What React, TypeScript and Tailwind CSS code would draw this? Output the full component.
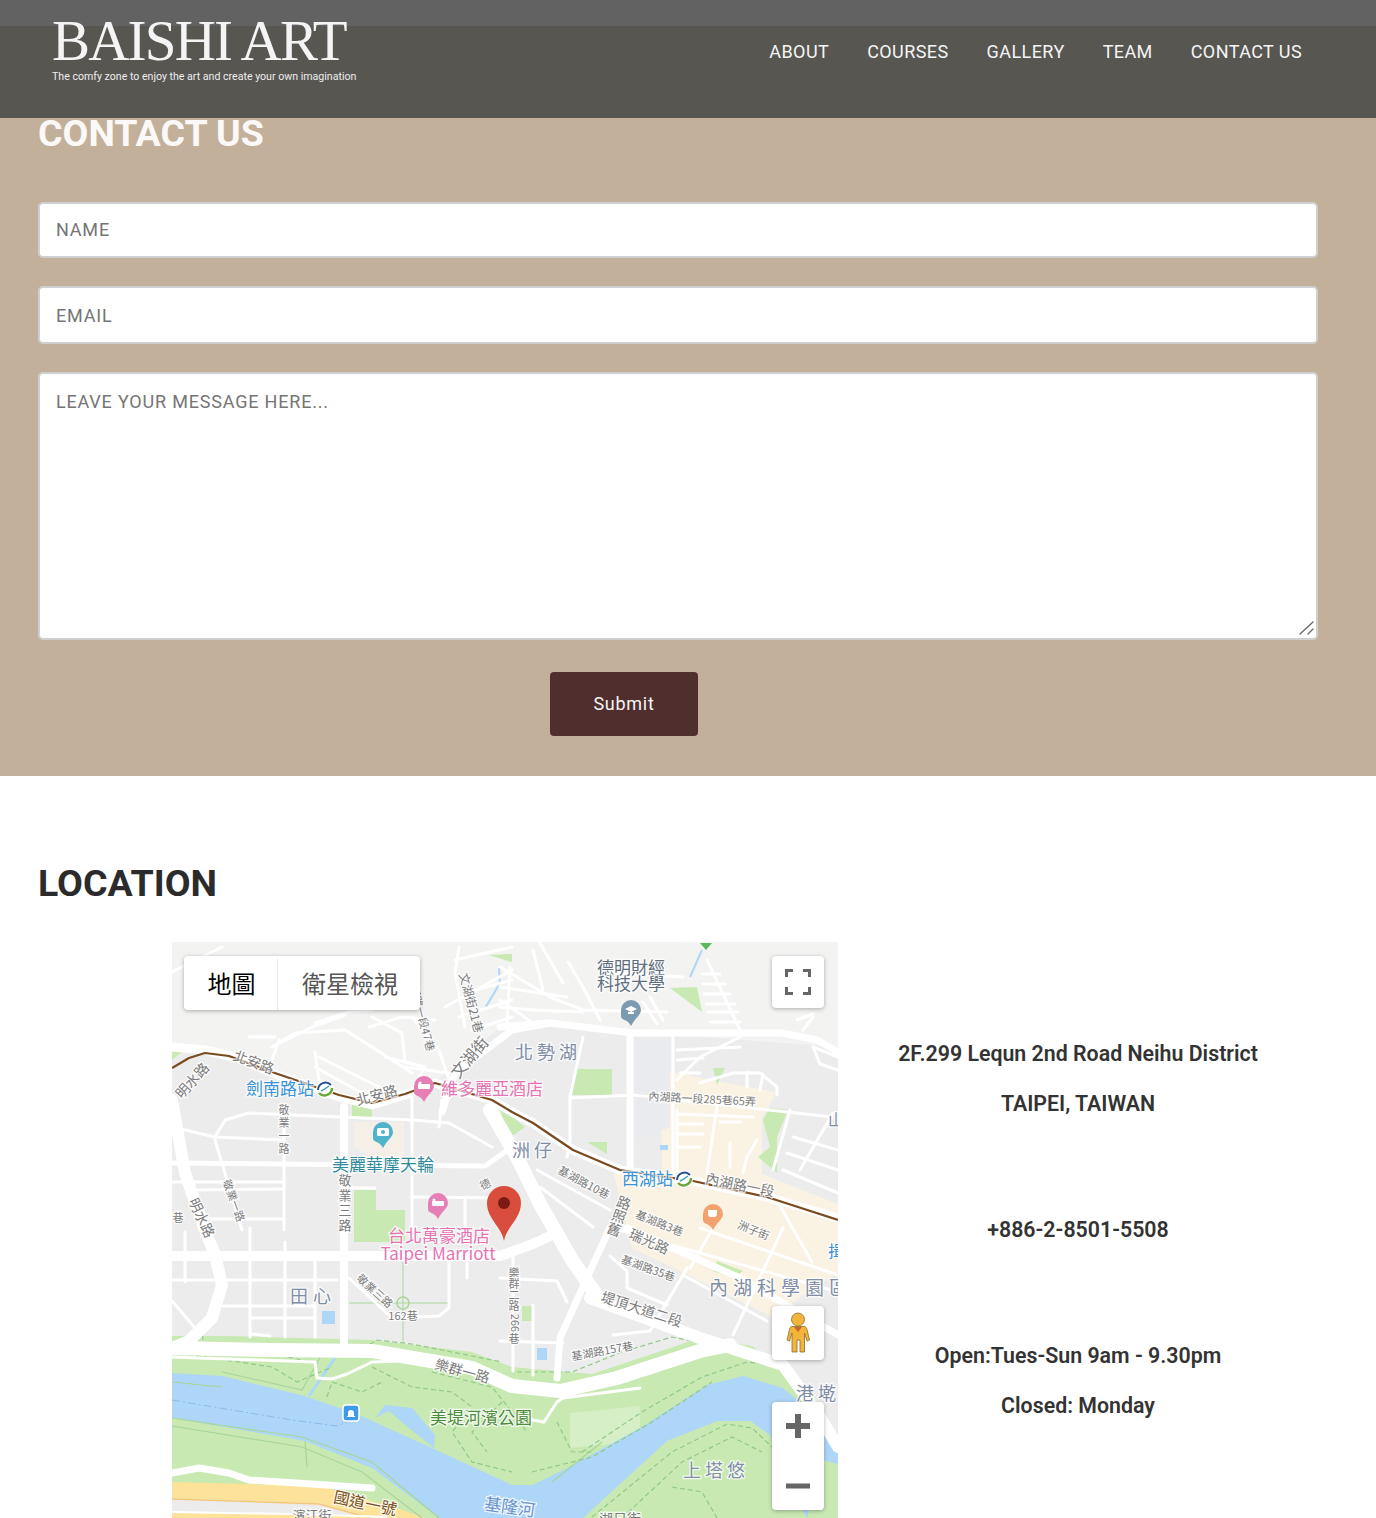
type Pt = [number, number];

const pts = (p: Pt[]) => p.map((q) => q.join(',')).join(' ');

// map data, all coordinates are local to the 666x576 map
const areas: { c: string; p: Pt[] }[] = [
  { c: '#f3f3f2', p: [[0, 0], [666, 0], [666, 105], [461, 90], [378, 80], [328, 85], [263, 140], [200, 160], [100, 130], [0, 105]] },
  { c: '#faf2e2', p: [[489, 128], [560, 142], [605, 150], [590, 175], [590, 232], [666, 262], [666, 330], [600, 375], [510, 330], [460, 306], [440, 226], [490, 232]] },
  { c: '#e9ebee', p: [[463, 97], [498, 97], [498, 185], [463, 198]] },
  { c: '#f5efe8', p: [[182, 180], [232, 180], [232, 215], [200, 215], [182, 205]] },
  { c: '#c9e9b2', p: [[180, 163], [200, 163], [200, 175], [180, 175]] },
  { c: '#c9e9b2', p: [[182, 248], [204, 248], [204, 268], [233, 268], [233, 300], [182, 300]] },
  { c: '#c9e9b2', p: [[405, 127], [440, 127], [440, 153], [400, 153]] },
  { c: '#c9e9b2', p: [[541, 126], [553, 126], [545, 143]] },
  { c: '#c9e9b2', p: [[498, 46], [525, 45], [530, 70]] },
  { c: '#c9e9b2', p: [[415, 200], [435, 200], [435, 212]] },
  { c: '#c9e9b2', p: [[328, 165], [353, 185], [335, 198]] },
  { c: '#c9e9b2', p: [[598, 166], [616, 168], [605, 195], [605, 231], [586, 215], [598, 205], [591, 178]] },
  { c: '#c9e9b2', p: [[317, 13], [340, 20], [340, 12]] },
  { c: '#c9e9b2', p: [[545, 319], [571, 329], [561, 336], [541, 329]] },
  { c: '#c9e9b2', p: [[350, 364], [360, 364], [360, 379], [350, 379]] },
  { c: '#c9e9b2', p: [[0, 108], [14, 107], [0, 118]] },
  { c: '#aed6f8', p: [[150, 369], [163, 369], [163, 382], [150, 382]] },
  { c: '#aed6f8', p: [[365, 406], [375, 406], [375, 418], [365, 418]] },
  { c: '#aed6f8', p: [[488, 203], [496, 203], [496, 208], [488, 208]] },
  // riverside park
  { c: '#c9e9b2', p: [[0, 394], [60, 394], [200, 398], [300, 410], [340, 425], [420, 432], [528, 396], [580, 404], [640, 450], [666, 505], [666, 576], [0, 576]] },
  { c: '#d6efc6', p: [[398, 471], [468, 464], [468, 499], [398, 506]] },
  // river
  { c: '#aed6f8', p: [[0, 431], [50, 434], [133, 454], [187, 473], [260, 506], [340, 543], [361, 543], [395, 526], [468, 486], [535, 443], [571, 434], [611, 446], [640, 470], [666, 505], [666, 522], [650, 518], [635, 576], [618, 546], [598, 493], [578, 479], [545, 479], [495, 499], [411, 576], [267, 576], [200, 526], [133, 499], [0, 476]] },
  { c: '#aed6f8', p: [[203, 476], [213, 463], [240, 466], [263, 493], [262, 506], [237, 486], [217, 469]] },
  // bottom left corner: highway and streets
  { c: '#ececec', p: [[0, 556], [147, 561], [205, 576], [0, 576]] },
  { c: '#fde29a', p: [[0, 540], [150, 544], [233, 569], [253, 576], [200, 576], [147, 561], [0, 556]] },
  { c: '#fde29a', p: [[0, 571], [200, 573], [215, 576], [0, 576]] },
];

const majorRoads: { w: number; p: Pt[] }[] = [
  { w: 9, p: [[0, 105], [33, 108], [67, 116], [100, 131], [167, 155], [200, 163], [233, 153], [263, 141], [320, 158], [340, 170], [361, 181], [401, 208], [448, 228], [521, 239], [595, 255], [666, 276]] },
  { w: 14, p: [[318, 168], [345, 215], [368, 262], [400, 318], [428, 358]] },
  { w: 10, p: [[0, 314], [172, 314], [260, 314], [328, 314], [361, 302], [384, 291]] },
  { w: 8, p: [[172, 165], [172, 406]] },
  { w: 12, p: [[0, 158], [13, 231], [33, 288], [43, 313], [50, 343], [40, 376], [17, 399], [0, 406]] },
  { w: 7, p: [[328, 85], [378, 81], [461, 91], [611, 91], [645, 98], [666, 110]] },
  { w: 7, p: [[270, 170], [283, 131], [340, 88], [378, 81]] },
  { w: 14, p: [[0, 406], [100, 408], [200, 409], [300, 426], [340, 444], [388, 449], [445, 436], [528, 409], [558, 403]] },
  { w: 12, p: [[418, 356], [528, 396], [611, 423], [645, 470], [666, 505]] },
  { w: 7, p: [[438, 286], [418, 329], [388, 396], [385, 436]] },
  { w: 7, p: [[455, 286], [568, 336], [666, 393]] },
  { w: 5, p: [[0, 221], [313, 224], [340, 205]] },
  { w: 7, p: [[458, 95], [458, 228]] },
  { w: 7, p: [[0, 531], [27, 526], [57, 531], [77, 538], [200, 546]] },
];

const minorRoads: Pt[][] = [
  [[0, 185], [43, 195], [110, 198]],
  [[43, 195], [53, 178], [77, 171], [167, 175], [240, 178], [277, 181], [320, 205]],
  [[112, 165], [112, 288]],
  [[240, 155], [240, 288]],
  [[293, 258], [293, 288]],
  [[240, 255], [340, 256]],
  [[20, 248], [110, 247]],
  [[30, 277], [110, 277]],
  [[43, 198], [70, 288]],
  [[180, 246], [203, 246]],
  [[270, 158], [267, 185]],
  [[100, 105], [123, 91], [173, 88], [200, 105], [240, 131]],
  [[107, 98], [100, 118]],
  [[147, 115], [207, 145]],
  [[143, 125], [197, 155]],
  [[143, 110], [147, 138]],
  [[200, 75], [230, 91], [233, 121]],
  [[213, 115], [253, 125], [240, 148]],
  [[273, 65], [340, 28]],
  [[283, 18], [340, 5]],
  [[287, 5], [283, 31], [293, 85]],
  [[240, 75], [267, 108], [277, 138]],
  [[173, 73], [140, 85], [100, 105]],
  [[0, 30], [50, 5]],
  [[77, 95], [103, 95]],
  [[143, 81], [177, 70], [200, 68]],
  [[197, 85], [230, 75], [263, 78]],
  [[233, 125], [277, 131]],
  [[287, 75], [340, 58]],
  [[293, 51], [340, 38]],
  [[300, 88], [340, 75]],
  [[361, 8], [371, 48]],
  [[338, 25], [335, 81]],
  [[328, 58], [361, 81]],
  [[411, 45], [428, 78]],
  [[478, 55], [491, 78]],
  [[471, 60], [485, 82]],
  [[445, 31], [511, 35]],
  [[361, 68], [411, 70]],
  [[621, 195], [666, 208]],
  [[615, 211], [666, 228]],
  [[611, 228], [666, 251]],
  [[641, 75], [631, 88]],
  [[625, 78], [641, 72]],
  [[535, 18], [568, 88]],
  [[530, 32], [548, 32]],
  [[531, 42], [553, 42]],
  [[532, 52], [558, 52]],
  [[534, 62], [563, 62]],
  [[536, 70], [566, 70]],
  [[538, 80], [568, 80]],
  [[501, 95], [501, 231]],
  [[398, 156], [461, 153], [660, 175]],
  [[398, 158], [398, 198], [395, 215]],
  [[411, 95], [398, 155]],
  [[328, 25], [378, 55], [411, 68], [495, 70]],
  [[328, 45], [395, 55]],
  [[328, 65], [361, 68]],
  [[368, 1], [391, 41]],
  [[396, 20], [408, 40], [415, 52]],
  [[505, 138], [528, 115], [568, 95]],
  [[505, 108], [568, 105]],
  [[505, 118], [531, 116]],
  [[508, 131], [528, 131]],
  [[528, 141], [561, 131], [588, 131], [605, 145], [605, 153]],
  [[575, 130], [575, 145]],
  [[591, 132], [588, 148]],
  [[666, 115], [641, 105], [648, 122], [666, 128]],
  [[661, 171], [628, 228]],
  [[618, 168], [601, 228]],
  [[545, 165], [535, 231]],
  [[505, 168], [505, 228]],
  [[505, 172], [581, 175]],
  [[505, 182], [531, 182]],
  [[505, 192], [531, 192]],
  [[505, 205], [528, 205]],
  [[548, 180], [568, 180]],
  [[585, 198], [575, 215], [571, 231]],
  [[558, 201], [558, 225]],
  [[365, 228], [438, 268]],
  [[368, 245], [421, 285]],
  [[328, 336], [385, 339], [395, 360]],
  [[361, 363], [361, 433]],
  [[341, 313], [341, 429]],
  [[328, 399], [391, 401]],
  [[438, 314], [455, 329], [455, 346], [495, 363]],
  [[515, 326], [478, 389], [441, 393]],
  [[611, 286], [561, 393]],
  [[518, 326], [541, 286]],
  [[666, 333], [528, 286]],
  [[511, 333], [595, 379]],
  [[440, 286], [666, 350]],
  [[113, 300], [113, 395]],
  [[143, 315], [143, 395]],
  [[78, 286], [78, 395]],
  [[13, 290], [13, 340]],
  [[0, 338], [165, 338]],
  [[50, 364], [143, 364]],
  [[80, 376], [143, 376]],
  [[80, 392], [98, 394]],
  [[0, 359], [23, 386]],
  [[177, 336], [220, 376], [267, 374], [277, 366], [277, 319]],
  [[295, 320], [295, 336]],
  [[0, 415], [143, 420], [145, 436], [160, 437], [175, 432], [200, 420], [230, 419]],
  [[391, 456], [468, 446]],
  [[372, 480], [385, 460], [391, 456]],
  [[360, 478], [372, 480]],
  [[0, 240], [112, 240]],
  [[600, 250], [640, 320]],
];

const parkPaths: Pt[][] = [
  [[30, 393], [33, 405], [100, 412], [140, 420]],
  [[0, 410], [100, 425], [125, 440], [160, 425]],
  [[155, 455], [160, 440], [190, 450], [210, 440]],
  [[200, 425], [240, 445], [280, 450], [300, 465], [280, 490], [300, 520], [340, 530]],
  [[260, 430], [320, 445], [340, 470], [355, 490]],
  [[330, 460], [300, 490], [315, 510]],
  [[385, 480], [400, 510], [420, 510]],
  [[410, 510], [470, 470], [530, 435], [575, 420], [620, 425]],
  [[360, 530], [420, 515], [480, 480], [540, 440]],
  [[420, 575], [500, 510], [555, 482], [580, 486], [600, 505]],
  [[450, 576], [510, 520], [560, 495], [590, 510]],
  [[500, 545], [530, 550], [545, 576]],
  [[177, 415], [205, 398], [240, 402], [290, 412], [330, 420]],
  [[345, 430], [400, 430], [450, 410], [500, 395], [525, 400]],
];

const parkLines: Pt[][] = [
  [[0, 476], [130, 495], [200, 520], [267, 576]],
  [[0, 484], [130, 505], [190, 530], [250, 576]],
  [[133, 499], [135, 525]],
  [[50, 430], [130, 448], [150, 412]],
  [[0, 440], [50, 445]],
  [[380, 540], [430, 500]],
];

type Lab = { t: string; x: number; y: number; s: number; c: string; r?: number; a?: 'start' | 'middle'; ls?: number };

const grey = '#7b7b7b';
const slate = '#7f8da6';
const labels: Lab[] = [
  { t: '明水路', x: 24, y: 142, s: 14, c: grey, r: -48 },
  { t: '北安路', x: 80, y: 125, s: 14, c: grey, r: 20 },
  { t: '劍南路站', x: 74, y: 153, s: 17, c: '#3b92d6', a: 'start' },
  { t: '北安路', x: 206, y: 158, s: 14, c: grey, r: -15 },
  { t: '維多麗亞酒店', x: 269, y: 153, s: 17, c: '#e672b4', a: 'start' },
  { t: '文湖街21巷', x: 295, y: 62, s: 12, c: grey, r: 75 },
  { t: '內湖路一段47巷', x: 245, y: 72, s: 11, c: grey, r: 75 },
  { t: '文湖街', x: 302, y: 119, s: 16, c: grey, r: -50 },
  { t: '德明財經', x: 459, y: 32, s: 17, c: '#5f6f7e' },
  { t: '科技大學', x: 459, y: 48, s: 17, c: '#5f6f7e' },
  { t: '北勢湖', x: 376, y: 117, s: 18, c: slate, ls: 4 },
  { t: '內湖路一段285巷65弄', x: 530, y: 161, s: 11, c: grey, r: 3 },
  { t: '洲仔', x: 362, y: 215, s: 18, c: slate, ls: 4 },
  { t: '基湖路10巷', x: 410, y: 244, s: 11, c: grey, r: 28 },
  { t: '西湖站', x: 450, y: 243, s: 17, c: '#3b92d6', a: 'start' },
  { t: '內湖路一段', x: 567, y: 248, s: 14, c: grey, r: 11 },
  { t: '敬業一路', x: 58, y: 260, s: 11, c: grey, r: 70 },
  { t: '明水路', x: 25, y: 278, s: 14, c: grey, r: 65 },
  { t: '美麗華摩天輪', x: 211, y: 229, s: 17, c: '#2f8b9c' },
  { t: '巷', x: 6, y: 280, s: 11, c: grey },
  { t: '基湖路3巷', x: 486, y: 285, s: 11, c: grey, r: 22 },
  { t: '瑞光路', x: 475, y: 304, s: 14, c: grey, r: 24 },
  { t: '洲子街', x: 580, y: 292, s: 11, c: grey, r: 22 },
  { t: '台北萬豪酒店', x: 267, y: 300, s: 17, c: '#e672b4' },
  { t: 'Taipei Marriott', x: 266, y: 318, s: 17, c: '#e672b4' },
  { t: '基湖路35巷', x: 475, y: 330, s: 11, c: grey, r: 20 },
  { t: '內湖科學園區', x: 537, y: 353, s: 19, c: slate, a: 'start', ls: 5 },
  { t: '田心', x: 141, y: 361, s: 18, c: slate, ls: 5 },
  { t: '敬業三路', x: 200, y: 352, s: 11, c: grey, r: 42 },
  { t: '162巷', x: 231, y: 378, s: 11, c: grey },
  { t: '堤頂大道二段', x: 468, y: 372, s: 14, c: grey, r: 18 },
  { t: '基湖路157巷', x: 431, y: 413, s: 11, c: grey, r: -10 },
  { t: '樂群一路', x: 289, y: 434, s: 14, c: grey, r: 15 },
  { t: '港墘', x: 646, y: 458, s: 18, c: slate, ls: 4 },
  { t: '美堤河濱公園', x: 258, y: 482, s: 17, c: '#4d8c3d', a: 'start' },
  { t: '上塔悠', x: 544, y: 535, s: 18, c: slate, ls: 4 },
  { t: '國道一號', x: 192, y: 567, s: 16, c: '#7a5020', r: 12 },
  { t: '濱江街', x: 140, y: 578, s: 13, c: grey },
  { t: '基隆河', x: 337, y: 571, s: 17, c: '#6a92cc', r: 8 },
  { t: '湖日街', x: 448, y: 582, s: 14, c: grey },
  { t: '山', x: 664, y: 184, s: 16, c: slate },
  { t: '揖', x: 664, y: 315, s: 16, c: '#3b92d6' },
  // house numbers in a vertical street name lie sideways
  { t: '266', x: 339, y: 381, s: 11, c: grey, r: 90, a: 'middle' },
];

type VLab = { t: string; x: number; y: number; s: number; gap: number; r?: number };
const vertical: VLab[] = [
  { t: '敬業一路', x: 112, y: 172, s: 11, gap: 13 },
  { t: '敬業三路', x: 173, y: 243, s: 13, gap: 15 },
  { t: '樂群二路', x: 342, y: 335, s: 11, gap: 11 },
  { t: '巷', x: 342, y: 401, s: 11, gap: 11 },
  { t: '路照舊', x: 450, y: 266, s: 14, gap: 14, r: 20 },
  { t: '德', x: 315, y: 246, s: 11, gap: 13, r: -25 },
];

function Pin({ x, y, fill, r = 10 }: { x: number; y: number; fill: string; r?: number }) {
  return (
    <g transform={`translate(${x} ${y})`}>
      <path d={`M${-r} 0a${r} ${r} 0 1 1 ${2 * r} 0c0 5-${r * 0.6} 8-${r} ${r + 6}c-${r * 0.4}-${r - 2}-${r}-${r * 0.5}-${r}-${r}z`} fill={fill} />
    </g>
  );
}

function Station({ x, y }: { x: number; y: number }) {
  return (
    <g transform={`translate(${x} ${y})`}>
      <circle r="9" fill="#fff" />
      <path d="M-7 1a7.500 7.500 0 0 1 13-5" fill="none" stroke="#27508f" strokeWidth="2" />
      <path d="M7-1a7.500 7.500 0 0 1-13 5" fill="none" stroke="#6aa83a" strokeWidth="2.500" />
      <path d="M-4 2c3-1 5-3 8-5" fill="none" stroke="#3a9fb0" strokeWidth="1.500" />
    </g>
  );
}

function MapDrawing() {
  return (
    <svg viewBox="0 0 666 576" width="666" height="576" className="block">
      <rect width="666" height="576" fill="#ececec" />
      {areas.map((a, i) => (
        <polygon key={i} points={pts(a.p)} fill={a.c} />
      ))}
      <polyline points={pts([[0, 557], [147, 562], [205, 578]])} fill="none" stroke="#f6c778" strokeWidth="1.500" />
      <polyline points={pts([[0, 570], [120, 572], [215, 575]])} fill="#fff" stroke="#fff" strokeWidth="2" />
      <polyline points={pts([[137, 454], [163, 416]])} fill="none" stroke="#aed6f8" strokeWidth="3" />
      <polyline points={pts([[530, 8], [518, 35]])} fill="none" stroke="#aed6f8" strokeWidth="2" />
      <polyline points={pts([[327, 26], [328, 41], [312, 68]])} fill="none" stroke="#aed6f8" strokeWidth="2" />
      <polyline points={pts([[0, 458], [60, 468], [120, 478], [165, 484], [180, 478]])} fill="none" stroke="#8fb8e8" strokeWidth="1" strokeDasharray="8 3 2 3" />
      {parkLines.map((p, i) => (
        <polyline key={i} points={pts(p)} fill="none" stroke="#a8d59a" strokeWidth="1.200" />
      ))}
      {parkPaths.map((p, i) => (
        <polyline key={i} points={pts(p)} fill="none" stroke="#8fc987" strokeWidth="1.200" strokeDasharray="5 3" />
      ))}
      <circle cx="231" cy="361" r="6" fill="none" stroke="#a8d59a" strokeWidth="1.500" />
      <polyline points={pts([[177, 361], [277, 361]])} fill="none" stroke="#a8d59a" strokeWidth="1" />
      <polyline points={pts([[231, 320], [231, 400]])} fill="none" stroke="#a8d59a" strokeWidth="1" />
      {minorRoads.map((p, i) => (
        <polyline key={i} points={pts(p)} fill="none" stroke="#fff" strokeWidth="3" strokeLinejoin="round" strokeLinecap="round" />
      ))}
      {majorRoads.map((r, i) => (
        <polyline key={i} points={pts(r.p)} fill="none" stroke="#fff" strokeWidth={r.w} strokeLinejoin="round" strokeLinecap="round" />
      ))}
      <polygon points={pts([[528, 1], [540, 1], [534, 8]])} fill="#5cb85c" />
      <polyline
        points={pts([[0, 126], [17, 116], [33, 111], [57, 114], [100, 130], [167, 153], [200, 161], [233, 152], [263, 141], [320, 158], [340, 170], [361, 181], [401, 208], [448, 228], [521, 239], [595, 255], [666, 278]])}
        fill="none"
        stroke="#7a4a20"
        strokeWidth="2.200"
        strokeLinejoin="round"
      />

      {labels.map((l, i) => (
        <text
          key={i}
          x={l.x}
          y={l.y}
          fontSize={l.s}
          fill={l.c}
          textAnchor={l.a ?? 'middle'}
          letterSpacing={l.ls}
          stroke="#fff"
          strokeOpacity="0.8"
          strokeWidth="2.500"
          paintOrder="stroke"
          transform={l.r ? `rotate(${l.r} ${l.x} ${l.y})` : undefined}
          fontFamily="'Noto Sans CJK TC','Noto Sans',sans-serif"
        >
          {l.t}
        </text>
      ))}
      {vertical.map((v, i) => (
        <g key={i} transform={v.r ? `rotate(${v.r} ${v.x} ${v.y})` : undefined}>
          {Array.from(v.t).map((ch, j) => (
            <text
              key={j}
              x={v.x}
              y={v.y + j * v.gap}
              fontSize={v.s}
              fill={grey}
              textAnchor="middle"
              stroke="#fff"
              strokeOpacity="0.8"
              strokeWidth="2.500"
              paintOrder="stroke"
              fontFamily="'Noto Sans CJK TC','Noto Sans',sans-serif"
            >
              {ch}
            </text>
          ))}
        </g>
      ))}

      <Station x={153} y={147} />
      <Station x={512} y={237} />

      <Pin x={252} y={144} fill="#e57fb6" />
      <rect x={246} y={142} width="12" height="5" rx="1" fill="#fff" />
      <circle cx={248} cy={141} r="1.500" fill="#fff" />
      <Pin x={266} y={261} fill="#e57fb6" />
      <rect x={260} y={259} width="12" height="5" rx="1" fill="#fff" />
      <circle cx={262} cy={258} r="1.500" fill="#fff" />
      <Pin x={211} y={190} fill="#4fb3c9" />
      <rect x={205} y={186} width="12" height="8" rx="1.500" fill="#fff" />
      <circle cx={211} cy={190} r="2" fill="#4fb3c9" />
      <Pin x={459} y={68} fill="#7d9bb0" />
      <path d="M453 67l6-3 6 3-6 3z" fill="#fff" />
      <path d="M456 70v2h6v-2" fill="#fff" />
      <Pin x={541} y={272} fill="#f3a26e" />
      <path d="M536 268h9v4a3 3 0 0 1-3 3h-3a3 3 0 0 1-3-3z" fill="#fff" />

      <rect x={171} y={463} width="16" height="16" rx="3" fill="#3f9bea" stroke="#fff" strokeWidth="1.500" />
      <path d="M175 475h8v-1h-1v-3a3 3 0 0 0-6 0v3h-1z" fill="#fff" />

      {/* red place marker */}
      <path d="M332 299c-2-14-17-22-17-38a17 17 0 0 1 34 0c0 16-15 24-17 38z" fill="#d94d3d" />
      <circle cx={332} cy={261} r="6" fill="#7c1a14" />
    </svg>
  );
}

function MapControls() {
  return (
    <>
      <div className="absolute left-3 top-[14px] flex h-[54px] w-[236px] rounded-sm bg-white pt-[3px] text-2xl shadow-[0_1px_4px_rgba(0,0,0,0.3)] font-['Roboto','Noto_Sans_CJK_TC',sans-serif]">
        <div className="flex w-[94px] items-center justify-center border-r border-[#e6e6e6] pl-[2px] text-black">地圖</div>
        <div className="flex flex-1 items-center justify-center pl-[2px] text-[#565656]">衛星檢視</div>
      </div>
      <div className="absolute right-[14px] top-[14px] flex h-[52px] w-[52px] items-center justify-center rounded-sm bg-white shadow-[0_1px_4px_rgba(0,0,0,0.3)]">
        <svg width="26" height="26" viewBox="0 0 26 26" fill="none" stroke="#666" strokeWidth="3">
          <path d="M1.500 8V1.500H8M18 1.500h6.500V8M24.500 18v6.500H18M8 24.500H1.500V18" />
        </svg>
      </div>
      <div className="absolute right-[14px] top-[364px] flex h-[54px] w-[52px] items-center justify-center rounded-sm bg-white shadow-[0_1px_4px_rgba(0,0,0,0.3)]">
        <svg width="24" height="42" viewBox="0 0 24 42" stroke="#8a6d2f" strokeWidth="0.800" fill="#f3b43c">
          <circle cx="12" cy="7.500" r="6.500" />
          <path d="M6 14.500h12c1.500 0 2.500 1 3 3l2.500 10.500-2.500 1-2.500-8V40h-4.500V28h-3v12H6V21l-2.500 8-2.500-1L3.500 17.500c.5-2 1-3 2.500-3z" />
          <path d="M8 15l4 5 4-5z" fill="#c9662b" stroke="none" />
        </svg>
      </div>
      <div className="absolute right-[14px] top-[460px] flex h-[108px] w-[52px] flex-col items-center justify-between rounded-sm bg-white py-3 shadow-[0_1px_4px_rgba(0,0,0,0.3)]">
        <svg width="24" height="24" viewBox="0 0 24 24" fill="#666">
          <path d="M9 0h6v9h9v6h-9v9H9v-9H0V9h9z" />
        </svg>
        <svg width="24" height="24" viewBox="0 0 24 24" fill="#666">
          <rect y="9.500" width="24" height="5" />
        </svg>
      </div>
    </>
  );
}

export default function App() {
  const fieldClass =
    'w-full rounded-[5px] border-2 border-[#cfcfcf] bg-white px-4 text-[18px] tracking-[0.045em] text-[#333] outline-none placeholder:text-[#757575]';

  return (
    <div className="h-[1518px] overflow-hidden bg-white font-[Roboto,sans-serif]">
      <header className="flex h-[118px] justify-between bg-[linear-gradient(#626262_26px,#575651_26px)] pl-[52px] pr-[74px] text-white">
        <div>
          <div className="mt-[11px] h-[54px] text-[57px] leading-[60px] tracking-[-1.8px] whitespace-nowrap text-[#f4f4f4] font-['Liberation_Serif',serif]">
            BAISHI ART
          </div>
          <p className="mt-[5px] text-[10.6px] leading-[14px] text-[#eeeeee]">The comfy zone to enjoy the art and create your own imagination</p>
        </div>
        <nav className="mt-[41px] flex h-[22px] gap-[38px] text-[18px] leading-[22px] tracking-[0.42px] text-[#f5f5f5]">
          <a>ABOUT</a>
          <a>COURSES</a>
          <a>GALLERY</a>
          <a>TEAM</a>
          <a>CONTACT US</a>
        </nav>
      </header>

      <section className="h-[658px] bg-[#c3b09b] px-[38px]">
        <h1 className="h-[30px] text-[37.5px] leading-[30px] font-bold text-[#fbf9f7]">CONTACT US</h1>
        <form className="mt-[54px] w-[1280px]">
          <input placeholder="NAME" className={`${fieldClass} block h-[56px] pb-[2px]`} />
          <input placeholder="EMAIL" className={`${fieldClass} mt-[28px] block h-[58px]`} />
          <div className="relative mt-[28px]">
            <textarea placeholder="LEAVE YOUR MESSAGE HERE..." className={`${fieldClass} block h-[268px] resize-none pt-[14px]`} />
            <svg width="16" height="16" viewBox="0 0 16 16" className="absolute bottom-[4px] right-[3px]" stroke="#666" strokeWidth="1.300" strokeLinecap="round">
              <path d="M1 14L14 2M9 14l5-5" />
            </svg>
          </div>
          <button type="button" className="mt-8 ml-[512px] h-16 w-[148px] rounded bg-[#512e2e] pb-[2px] text-[18px] tracking-[0.04em] text-[#f5f5f5]">
            Submit
          </button>
        </form>
      </section>

      <section className="px-[38px] pt-[92px]">
        <h2 className="h-[30px] text-[37.5px] leading-[30px] font-bold text-[#2b2b2b]">LOCATION</h2>
        <div className="mt-[44px] flex w-[1280px]">
          <div className="flex w-[800px] justify-end">
            <div className="relative h-[576px] w-[666px] overflow-hidden">
              <MapDrawing />
              <MapControls />
            </div>
          </div>
          <div className="flex w-[480px] flex-col pt-[97px] text-center text-[21.35px] leading-[30px] font-semibold text-[#333]">
            <p>2F.299 Lequn 2nd Road Neihu District</p>
            <p className="mt-5">TAIPEI, TAIWAN</p>
            <p className="mt-24">+886-2-8501-5508</p>
            <p className="mt-24">Open:Tues-Sun 9am - 9.30pm</p>
            <p className="mt-5">Closed: Monday</p>
          </div>
        </div>
      </section>
    </div>
  );
}
